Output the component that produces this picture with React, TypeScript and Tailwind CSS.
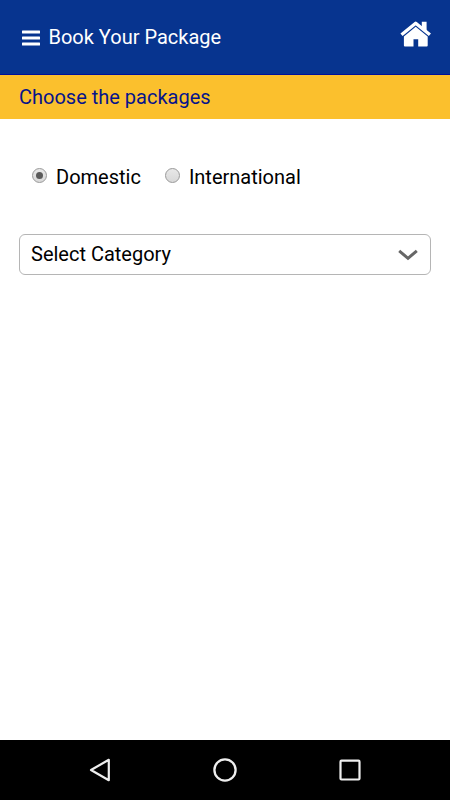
import React, { useState } from 'react';

type PackageType = 'domestic' | 'international';

const PACKAGE_TYPES: { id: PackageType; label: string }[] = [
  { id: 'domestic', label: 'Domestic' },
  { id: 'international', label: 'International' },
];

const MenuIcon = () => (
  <svg width="18" height="16" viewBox="0 0 18 16" fill="#fff">
    <rect x="0" y="0.5" width="18" height="3" rx="0.5" />
    <rect x="0" y="6.5" width="18" height="3" rx="0.5" />
    <rect x="0" y="12.5" width="18" height="3" rx="0.5" />
  </svg>
);

const HomeIcon = () => (
  <svg width="32" height="27" viewBox="0 0 32 27" fill="none">
    <path d="M1.5 13.8 15.7 2.2 29.9 13.8" stroke="#fff" strokeWidth="3.4" strokeLinejoin="round" />
    <path d="M21.8 0.8h4.8v9.9l-4.8-4z" fill="#fff" />
    <path d="M15.7 5.8 27.7 15.6V24.6a1 1 0 0 1-1 1H18.2V18.2H13.5V25.6H4.9a1 1 0 0 1-1-1V15.6z" fill="#fff" />
  </svg>
);

const Radio: React.FC<{ checked: boolean }> = ({ checked }) => (
  <span className="flex h-[15px] w-[15px] items-center justify-center rounded-full border border-[#999] bg-linear-to-b from-[#e8e8e8] to-[#d8d8d8]">
    {checked && <span className="h-[7px] w-[7px] rounded-full bg-[#5a5a5a]" />}
  </span>
);

export default function App() {
  const [selected, setSelected] = useState<PackageType>('domestic');

  return (
    <div className="flex h-[800px] w-[450px] flex-col bg-white font-[Roboto,sans-serif] text-[20px] leading-6 text-black">
      {/* Header */}
      <header className="flex h-[75px] items-start justify-between border-b border-[#00109b] bg-[#07348f] pr-[18px] pl-[22px] text-white">
        <div className="flex items-center pt-[25px]">
          <button className="mt-[2px]" aria-label="Menu">
            <MenuIcon />
          </button>
          <h1 className="ml-2 pl-[0.5px]">Book Your Package</h1>
        </div>
        <button className="pt-[21px]" aria-label="Home">
          <HomeIcon />
        </button>
      </header>

      <div className="flex h-[44px] items-center bg-[#fbc02d] pl-[19px] text-[#07148a]">
        <h2>Choose the packages</h2>
      </div>

      {/* Package search */}
      <main className="flex-1 px-[19px] pt-[46px]">
        <div className="flex gap-6 pl-[13px]" role="radiogroup">
          {PACKAGE_TYPES.map((type) => (
            <button
              key={type.id}
              role="radio"
              aria-checked={selected === type.id}
              onClick={() => setSelected(type.id)}
              className="flex items-start"
            >
              <span className="mt-[3px] mr-[9px]">
                <Radio checked={selected === type.id} />
              </span>
              {type.label}
            </button>
          ))}
        </div>

        <button className="mt-[45px] flex h-[41px] w-full items-center justify-between rounded-md border border-[#b5b5b5] pr-3 pl-[11px]">
          <span className="-mt-px">Select Category</span>
          <svg width="20" height="12" viewBox="0 0 20 12" fill="none">
            <path d="M1.2 1.9 10 9.3 18.8 1.9" stroke="#666" strokeWidth="3" />
          </svg>
        </button>
      </main>

      {/* System navigation */}
      <nav className="flex h-[60px] items-center justify-center gap-[101px] bg-black">
        <svg width="24" height="24" viewBox="0 0 24 24" fill="none" stroke="#eee" strokeWidth="2.2" strokeLinejoin="round">
          <path d="M3 12 20.8 1.8V22.2z" />
        </svg>
        <svg width="24" height="24" viewBox="0 0 24 24" fill="none" stroke="#eee" strokeWidth="2.3">
          <circle cx="12" cy="12" r="10.6" />
        </svg>
        <svg width="24" height="24" viewBox="0 0 24 24" fill="none" stroke="#eee" strokeWidth="2.2">
          <rect x="2.5" y="2.7" width="19" height="18.8" rx="1" />
        </svg>
      </nav>
    </div>
  );
}
